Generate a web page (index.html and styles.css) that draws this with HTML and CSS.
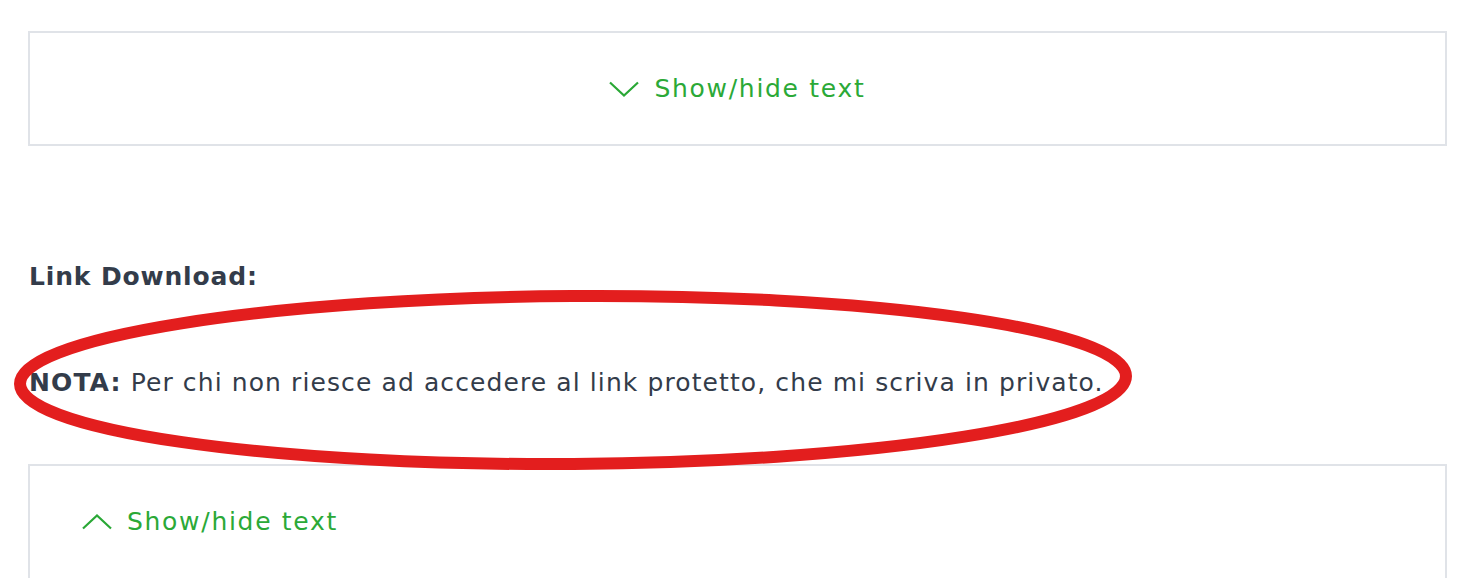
FILE: index.html
```html
<!DOCTYPE html>
<html lang="it">
<head>
<meta charset="utf-8">
<link rel="stylesheet" href="styles.css">
</head>
<body>
<div class="page">
  <div class="toggle-box toggle-box--center">
    <div class="toggle">
      <svg class="chev" width="30" height="16" viewBox="0 0 30 16"><path d="M1 1.5 L15 14.5 L29 1.5" fill="none" stroke="#2aa836" stroke-width="2.2"/></svg>
      <span>Show/hide text</span>
    </div>
  </div>
  <p class="label">Link Download:</p>
  <div class="note-wrap">
    <p class="note"><strong>NOTA:</strong> Per chi non riesce ad accedere al link protetto, che mi scriva in privato.</p>
    <svg class="circle" width="1140" height="200" viewBox="0 0 1140 200"><ellipse cx="573" cy="98" rx="553" ry="84" transform="rotate(-0.4 573 98)" fill="none" stroke="#e31e1e" stroke-width="12"/></svg>
  </div>
  <div class="toggle-box toggle-box--open">
    <div class="toggle">
      <svg class="chev" width="30" height="16" viewBox="0 0 30 16"><path d="M1 14.5 L15 1.5 L29 14.5" fill="none" stroke="#2aa836" stroke-width="2.2"/></svg>
      <span>Show/hide text</span>
    </div>
  </div>
</div>
</body>
</html>
```
FILE: styles.css
```css
* { box-sizing: border-box; }
html, body { margin: 0; padding: 0; background: #fff; }
body {
  font-family: "DejaVu Sans", "Noto Sans", sans-serif;
  color: #333c4a;
  overflow: hidden;
}
.page {
  padding: 31px 17px 0 28px;
}
.toggle-box {
  border: 2px solid #e0e3e8;
  height: 115px;
  display: flex;
  align-items: center;
}
.toggle-box--center { justify-content: center; }
.toggle-box--open {
  align-items: flex-start;
  padding: 41px 0 0 52px;
  height: 200px;
}
.toggle {
  display: flex;
  align-items: center;
  gap: 15px;
  color: #2ba937;
  font-size: 25px;
  letter-spacing: 1.7px;
}
.label {
  margin: 116px 0 0 1px;
  font-weight: bold;
  font-size: 25px;
  line-height: 30px;
  letter-spacing: 0.85px;
}
.note-wrap {
  position: relative;
  height: 172px;
}
.note {
  margin: 0;
  padding-top: 76px;
  padding-left: 1px;
  font-size: 25px;
  line-height: 30px;
  letter-spacing: 1.1px;
}
.circle {
  position: absolute;
  left: -28px;
  top: -10px;
}
```
